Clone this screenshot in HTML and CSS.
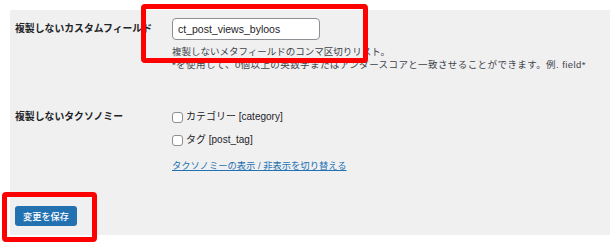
FILE: index.html
```html
<!DOCTYPE html>
<html lang="ja">
<head>
<meta charset="utf-8">
<link rel="stylesheet" href="styles.css">
</head>
<body>
<div class="panel">
  <div class="row row-fields">
    <div class="label">複製しないカスタムフィールド</div>
    <div class="field">
      <input class="text-input" type="text" value="ct_post_views_byloos">
      <p class="desc desc-1">複製しないメタフィールドのコンマ区切りリスト。</p>
      <p class="desc desc-2">*を使用して、0個以上の英数字またはアンダースコアと一致させることができます。例. field*</p>
    </div>
  </div>
  <div class="row row-tax">
    <div class="label label-tax">複製しないタクソノミー</div>
    <div class="field">
      <label class="check"><span class="box"></span>カテゴリー [category]</label>
      <label class="check check-2"><span class="box"></span>タグ [post_tag]</label>
      <a class="toggle" href="#">タクソノミーの表示 / 非表示を切り替える</a>
    </div>
  </div>
  <div class="actions">
    <button class="btn">変更を保存</button>
  </div>
</div>
<div class="mark mark-1"></div>
<div class="mark mark-2"></div>
</body>
</html>
```
FILE: styles.css
```css
* { box-sizing: border-box; }
html, body { margin: 0; padding: 0; background: #fff; }
body {
  font-family: "Liberation Sans", "Noto Sans CJK JP", sans-serif;
  color: #1d2327;
  width: 610px;
  height: 245px;
  overflow: hidden;
  position: relative;
}
.panel {
  margin: 10px 0 0 10px;
  height: 225px;
  background: #f0f0f1;
  padding: 8px 0 0 5px;
}
.row {
  display: grid;
  grid-template-columns: 157px 1fr;
}
.label {
  font-size: 9.85px;
  font-weight: bold;
  line-height: 22px;
}
.text-input {
  display: block;
  width: 148px;
  height: 22px;
  border: 1px solid #8c8f94;
  border-radius: 4px;
  background: #fff;
  font-family: "Liberation Sans", sans-serif;
  font-size: 10.5px;
  color: #1d2327;
  padding: 0 5px;
  margin: 0;
}
.desc {
  margin: 0;
  font-size: 9.5px;
  line-height: 13px;
  color: #3c434a;
}
.desc-1 { margin-top: 5px; }
.desc-2 { letter-spacing: 0.42px; }
.row-tax { margin-top: 39px; }
.label-tax { line-height: 14px; }
.check {
  display: flex;
  align-items: center;
  font-size: 10px;
  line-height: 14px;
  color: #1d2327;
}
.check-2 { margin-top: 9px; }
.box {
  width: 11px;
  height: 11px;
  border: 1px solid #8c8f94;
  border-radius: 3px;
  background: #fff;
  margin-right: 3px;
}
.toggle {
  display: block;
  margin-top: 12px;
  font-size: 9.3px;
  line-height: 14px;
  color: #2271b1;
  text-decoration: underline;
}
.actions { margin-top: 33px; }
.btn {
  display: block;
  width: 62px;
  height: 20px;
  border: 0;
  border-radius: 3px;
  background: #2271b1;
  color: #fff;
  font-family: "Noto Sans CJK JP", sans-serif;
  font-size: 9.2px;
  font-weight: 500;
  padding: 0;
}
.mark {
  position: absolute;
  border: 5px solid #f00;
  border-radius: 4px;
}
.mark-1 { left: 141px; top: 4px; width: 227px; height: 59px; }
.mark-2 { left: 2px; top: 192px; width: 95px; height: 50px; }
```
